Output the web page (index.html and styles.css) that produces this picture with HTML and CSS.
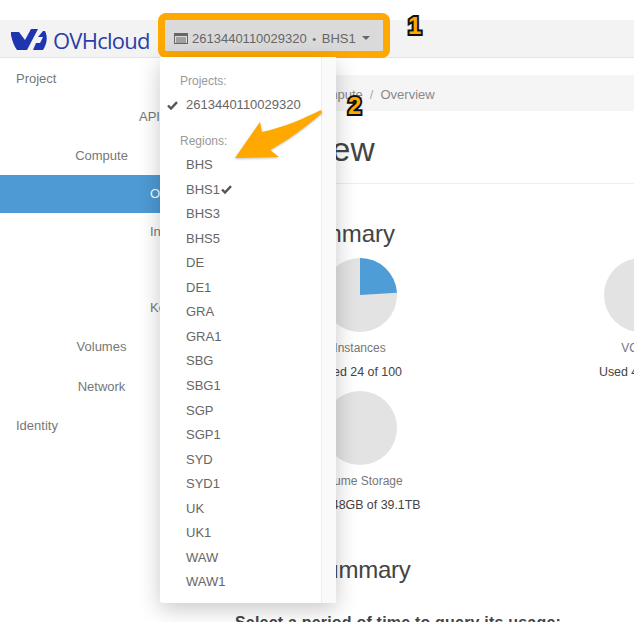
FILE: index.html
```html
<!DOCTYPE html>
<html lang="en">

<head>
    <meta charset="UTF-8">
    <meta name="viewport" content="width=device-width, initial-scale=1.0">
    <title>Instance Overview</title>
    <link rel="stylesheet" href="styles.css">
</head>

<body>
    <div id="page">
        <header id="topbar">
            <div class="brand">
                <svg class="brand-mark" width="38" height="24" viewBox="0 0 38 24">
                    <path d="M1 4 L9 4 L15 12 L21 1 L28 1 L17 22 L7 22 C4 18 2 12 1 7 Z" fill="#1f35b0" />
                    <path d="M33 3 L35 3 C38 9 37 16 33 22 L23 22 L26 15 L30 15 L33 9 L28 9 Z" fill="#1f35b0" />
                </svg>
                <span class="brand-name">OVHcloud</span>
            </div>
            <button id="project-picker">
                <svg width="14" height="11" viewBox="0 0 14 11">
                    <rect x="0.5" y="0.5" width="13" height="10" fill="none" stroke="#666" />
                    <rect x="0" y="0" width="14" height="3" fill="#666" />
                    <path d="M2 5 H12 M2 7 H12 M2 9 H12" stroke="#666" stroke-width="1" />
                </svg>
                <span class="picker-text">2613440110029320 <span class="dot">•</span> BHS1</span>
                <span class="caret"></span>
            </button>
        </header>

        <div id="content">
            <nav id="sidebar">
                <div class="nav-row nav-top">Project</div>
                <div class="nav-row nav-sub nav-api">API Access</div>
                <div class="nav-row nav-group">Compute</div>
                <div class="nav-children">
                    <div class="nav-row nav-sub active">Overview</div>
                    <div class="nav-row nav-sub">Instances</div>
                    <div class="nav-row nav-sub"></div>
                    <div class="nav-row nav-sub">Key Pairs</div>
                </div>
                <div class="nav-row nav-group">Volumes</div>
                <div class="nav-row nav-group">Network</div>
                <div class="nav-row nav-top">Identity</div>
            </nav>

            <main id="main">
                <div class="breadcrumb">Project<span class="sep">/</span>Compute<span class="sep">/</span>Overview</div>
                <h1>Overview</h1>
                <h3 class="limit-title">Limit Summary</h3>
                <div class="pies">
                    <div class="pie-box">
                        <svg class="pie" width="74" height="74" viewBox="0 0 74 74">
                            <circle cx="37" cy="37" r="37" />
                            <path class="slice" d="M37 37 V0 A37 37 0 0 1 73.93 34.68 Z" />
                        </svg>
                        <div class="pie-label">Instances</div>
                        <div class="pie-used">Used 24 of 100</div>
                    </div>
                    <div class="pie-box">
                        <svg class="pie" width="74" height="74" viewBox="0 0 74 74">
                            <circle cx="37" cy="37" r="37" />
                        </svg>
                        <div class="pie-label">VCPUs</div>
                        <div class="pie-used">Used 48 of 200</div>
                    </div>
                    <div class="pie-box">
                        <svg class="pie" width="74" height="74" viewBox="0 0 74 74">
                            <circle cx="37" cy="37" r="37" />
                        </svg>
                        <div class="pie-label">Volume Storage</div>
                        <div class="pie-used">Used 48GB of 39.1TB</div>
                    </div>
                </div>
                <h3 class="usage-title">Usage Summary</h3>
                <p class="usage-text">Select a period of time to query its usage:</p>
            </main>
        </div>

        <div id="project-menu">
            <div class="menu-list">
                <div class="menu-head">Projects:</div>
                <div class="menu-item">
                    <svg class="check check-left" width="11" height="9" viewBox="0 0 11 9"><path d="M1 4.5 L4 7.5 L10 1.2" /></svg>
                    2613440110029320
                </div>
                <div class="menu-head menu-head-gap">Regions:</div>
                <div class="menu-item">BHS</div>
                <div class="menu-item">BHS1<svg class="check" width="11" height="9" viewBox="0 0 11 9"><path d="M1 4.5 L4 7.5 L10 1.2" /></svg></div>
                <div class="menu-item">BHS3</div>
                <div class="menu-item">BHS5</div>
                <div class="menu-item">DE</div>
                <div class="menu-item">DE1</div>
                <div class="menu-item">GRA</div>
                <div class="menu-item">GRA1</div>
                <div class="menu-item">SBG</div>
                <div class="menu-item">SBG1</div>
                <div class="menu-item">SGP</div>
                <div class="menu-item">SGP1</div>
                <div class="menu-item">SYD</div>
                <div class="menu-item">SYD1</div>
                <div class="menu-item">UK</div>
                <div class="menu-item">UK1</div>
                <div class="menu-item">WAW</div>
                <div class="menu-item">WAW1</div>
            </div>
            <div class="menu-track"></div>
        </div>

        <svg id="arrow" width="634" height="200" viewBox="0 0 634 200">
            <path d="M235 158 L260 122 L262 132 C285 127 305 118 321 110 L322 113 C305 127 290 139 270 150 L279 157 Z" />
        </svg>
        <div class="step step-one">1</div>
        <div class="step step-two">2</div>
    </div>
</body>

</html>
```

FILE: styles.css
```css
body,
html {
    width: 100%;
    height: 100%;
    padding: 0;
    margin: 0;
    overflow: hidden;
    background: #fff;
}

#page {
    position: relative;
    width: 634px;
    height: 622px;
    overflow: hidden;
    font-family: "Liberation Sans", Arial, sans-serif;
    font-size: 13px;
    color: #666;
}

#topbar {
    display: flex;
    margin-top: 20px;
    height: 37px;
    background: #f3f3f3;
    border-bottom: 1px solid #e4e4e4;
}

.brand {
    display: flex;
    align-items: center;
    width: 165px;
    padding-left: 10px;
    padding-top: 2px;
    box-sizing: border-box;
}

.brand-mark {
    flex: none;
}

.brand-name {
    margin-left: 5px;
    font-family: "Open Sans", sans-serif;
    font-size: 22px;
    letter-spacing: -0.75px;
    color: #2a3eaa;
}

#project-picker {
    display: flex;
    align-items: center;
    width: 218px;
    height: 31px;
    padding: 5px 0 0 9px;
    background: #dadada;
    border: none;
    border-radius: 1px;
    outline: 7px solid #ffa800;
    font: inherit;
    color: #666;
}

.picker-text {
    margin-left: 4px;
    white-space: nowrap;
}

.dot {
    margin: 0 2px;
    font-size: 11px;
}

.caret {
    margin-left: 6px;
    border-top: 4px solid #666;
    border-left: 4px solid transparent;
    border-right: 4px solid transparent;
}

#content {
    display: flex;
}

#sidebar {
    flex: none;
    width: 220px;
    padding-top: 1.5px;
    color: #777;
}

.nav-row {
    height: 38.5px;
    line-height: 38.5px;
    white-space: nowrap;
}

.nav-top {
    padding-left: 16px;
}

.nav-group {
    width: 203px;
    text-align: center;
}

.nav-sub {
    padding-left: 150px;
}

.nav-api {
    padding-left: 139px;
}

.nav-children .nav-row {
    height: 38px;
    line-height: 38px;
}

.nav-children ~ .nav-row {
    height: 39.5px;
    line-height: 39.5px;
}

.nav-row.active {
    background: #4d9ad4;
    color: #fff;
}

#main {
    flex: 1;
    min-width: 0;
    color: #444;
}

.breadcrumb {
    margin-top: 17px;
    height: 36px;
    line-height: 39px;
    padding-left: 32px;
    background: #f5f5f5;
    color: #888;
    white-space: nowrap;
}

.sep {
    margin: 0 7px;
    color: #aaa;
}

h1 {
    margin: 0;
    padding: 18px 0 12px 15px;
    height: 42px;
    line-height: 42px;
    font-size: 33.5px;
    font-weight: normal;
    border-bottom: 1px solid #eee;
}

h3 {
    margin: 0;
    padding-left: 15px;
    height: 28px;
    line-height: 28px;
    font-size: 24px;
    font-weight: normal;
    white-space: nowrap;
}

.limit-title {
    margin-top: 36px;
}

.pies {
    display: grid;
    grid-template-columns: 280px 280px;
    column-gap: 1px;
    row-gap: 10px;
    margin-top: 10px;
}

.pie-box {
    display: flex;
    flex-direction: column;
    align-items: center;
    font-size: 12px;
    white-space: nowrap;
}

.pie circle {
    fill: #e3e3e3;
}

.pie .slice {
    fill: #4e9dd6;
}

.pie {
    display: block;
}

.pie-label {
    margin-top: 7px;
    line-height: 18px;
    color: #777;
}

.pie-used {
    margin-top: 6px;
    line-height: 18px;
    font-size: 12.4px;
    color: #444;
}

.usage-title {
    margin-top: 42px;
    letter-spacing: -0.25px;
}

.usage-text {
    margin: 29px 0 0 15px;
    font-size: 16px;
    line-height: 20px;
    font-weight: bold;
    letter-spacing: 0.2px;
    color: #444;
    white-space: nowrap;
}

#project-menu {
    position: absolute;
    left: 160px;
    top: 57px;
    width: 176px;
    height: 546px;
    display: flex;
    background: #fff;
    border-radius: 0 0 3px 3px;
    box-shadow: 0 6px 22px rgba(0, 0, 0, 0.22);
}

.menu-list {
    flex: 1;
    padding-top: 12px;
}

.menu-track {
    flex: none;
    width: 14px;
    background: #fafafa;
    border-left: 1px solid #eee;
}

.menu-head {
    height: 24px;
    line-height: 24px;
    padding-left: 20px;
    font-size: 12px;
    color: #999;
}

.menu-head-gap {
    margin-top: 11.5px;
}

.menu-item {
    position: relative;
    height: 24.55px;
    line-height: 24.55px;
    padding-left: 26px;
    color: #666;
}

.check {
    margin-left: 1px;
    fill: none;
    stroke: #555;
    stroke-width: 2.4;
}

.check-left {
    position: absolute;
    left: 7px;
    top: 8px;
    margin: 0;
}

#arrow {
    position: absolute;
    left: 0;
    top: 0;
    fill: #ffa800;
    filter: drop-shadow(0 1px 1px rgba(0, 0, 0, 0.25));
}

.step {
    position: absolute;
    font-size: 24px;
    line-height: 24px;
    font-weight: bold;
    color: #ffa800;
    -webkit-text-stroke: 4px #111;
    paint-order: stroke fill;
    text-shadow: 0 1px 2px rgba(0, 0, 0, 0.3);
}

.step-one {
    left: 408px;
    top: 14px;
}

.step-two {
    left: 348px;
    top: 94px;
}
```
